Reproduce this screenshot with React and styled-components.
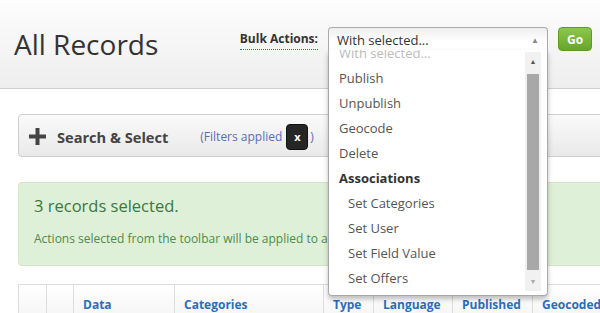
import React from 'react';
import styled, { createGlobalStyle } from 'styled-components';

const GlobalStyle = createGlobalStyle`
  html, body {
    margin: 0;
    padding: 0;
    background: #fff;
    font-family: "Open Sans", "Liberation Sans", sans-serif;
  }
  #root {
    width: 600px;
    height: 313px;
    overflow: hidden;
  }
`;

const Page = styled.div`
  width: 600px;
  height: 313px;
  overflow: hidden;
  position: relative;
`;

const Header = styled.header`
  height: 89px;
  box-sizing: border-box;
  border-bottom: 1px solid #cfcfcf;
  background: linear-gradient(#fdfdfd, #eeeeee);
  display: flex;
  align-items: flex-start;
`;

const Title = styled.h1`
  margin: 27px 0 0 14px;
  font-size: 28px;
  font-weight: 400;
  line-height: 34px;
  color: #333;
`;

const Toolbar = styled.div`
  margin-left: auto;
  margin-right: 8px;
  margin-top: 27px;
  display: flex;
  align-items: flex-start;
`;

const BulkLabel = styled.span`
  font-size: 12px;
  font-weight: 700;
  color: #333;
  line-height: 16px;
  margin-top: 4px;
  margin-right: 10px;
  padding-bottom: 2px;
  border-bottom: 1px dotted #2a6ebb;
`;

const SelectWrap = styled.div`
  position: relative;
  width: 220px;
`;

const SelectBox = styled.div`
  height: 24px;
  box-sizing: border-box;
  border: 1px solid #aaa;
  border-bottom: none;
  border-radius: 4px 4px 0 0;
  background: linear-gradient(#eeeeee, #ffffff 60%);
  display: flex;
  align-items: center;
  padding: 0 8px;
  font-size: 13px;
  color: #333;
`;

const Arrow = styled.span`
  margin-left: auto;
  font-size: 8px;
  color: #888;
`;

const Dropdown = styled.div`
  position: absolute;
  top: 23px;
  left: 0;
  width: 220px;
  height: 246px;
  box-sizing: border-box;
  background: #fff;
  border: 1px solid #aaa;
  border-top: none;
  border-radius: 0 0 4px 4px;
  box-shadow: 0 3px 5px rgba(0, 0, 0, 0.25);
  display: flex;
  overflow: hidden;
  z-index: 5;
`;

const List = styled.ul`
  list-style: none;
  margin: 0;
  padding: 0;
  flex: 1;
  margin-top: -9px;
`;

const Item = styled.li`
  height: 25px;
  line-height: 25px;
  font-size: 13px;
  padding-left: ${p => (p.$indent ? 19 : 10)}px;
  color: ${p => (p.$faded ? '#bbb' : p.$group ? '#333' : '#555')};
  font-weight: ${p => (p.$group ? 700 : 400)};
`;

const Scrollbar = styled.div`
  width: 16px;
  margin: 2px 6px 4px 0;
  background: #f1f1f1;
  display: flex;
  flex-direction: column;
  align-items: center;
`;

const ScrollArrow = styled.div`
  height: 19px;
  display: flex;
  align-items: center;
  justify-content: center;
  font-size: 7px;
  color: ${p => (p.$dim ? '#aaa' : '#555')};
`;

const Thumb = styled.div`
  width: 12px;
  flex: 1;
  margin: 3px 0 2px;
  background: #a8a8a8;
`;

const GoButton = styled.button`
  margin-left: 10px;
  width: 34px;
  height: 24px;
  border: 1px solid #5d9a2a;
  border-radius: 4px;
  background: linear-gradient(#8dc64c, #66a52b);
  color: #fff;
  font-family: inherit;
  font-size: 12px;
  font-weight: 700;
  padding: 0;
`;

const Content = styled.div`
  padding: 25px 0 0 18px;
  display: flex;
  flex-direction: column;
`;

const SearchPanel = styled.div`
  width: 700px;
  height: 43px;
  box-sizing: border-box;
  border: 1px solid #cfcfcf;
  border-radius: 4px;
  background: linear-gradient(#fafafa, #e9e9e9);
  display: flex;
  align-items: center;
  padding-left: 10px;
  padding-top: 2px;
`;

const PlusIcon = styled.svg`
  width: 17px;
  height: 17px;
  margin-right: 11px;
`;

const PanelTitle = styled.span`
  font-size: 14.6px;
  font-weight: 700;
  color: #444;
  margin-right: 32px;
`;

const FilterNote = styled.span`
  font-size: 12px;
  color: #5b6db5;
  display: flex;
  align-items: center;
`;

const ClearBadge = styled.span`
  width: 22px;
  height: 26px;
  margin: 0 2px 0 4px;
  border-radius: 4px;
  background: #262626;
  border: 1px solid #111;
  box-sizing: border-box;
  color: #fff;
  font-weight: 700;
  font-size: 11px;
  display: flex;
  align-items: center;
  justify-content: center;
`;

const Alert = styled.div`
  margin-top: 25px;
  width: 700px;
  height: 84px;
  box-sizing: border-box;
  background: #dff0d8;
  border: 1px solid #d3e8c4;
  border-radius: 4px;
  padding: 11px 15px;
  color: #3c763d;
`;

const AlertTitle = styled.div`
  font-size: 16.5px;
  line-height: 24px;
`;

const AlertText = styled.div`
  margin-top: 13px;
  font-size: 12px;
  line-height: 16px;
  color: #4f8a49;
`;

const Table = styled.div`
  margin-top: 18px;
  display: flex;
  height: 40px;
  border: 1px solid #ddd;
  border-bottom: none;
  background: linear-gradient(#ffffff, #f3f3f3);
  width: 700px;
  box-sizing: border-box;
`;

const Th = styled.div`
  width: ${p => p.$w}px;
  flex: none;
  box-sizing: border-box;
  border-right: 1px solid #ddd;
  padding: 11px 0 0 9px;
  font-size: 12px;
  font-weight: 700;
  color: #2a6ebb;
`;

const options = [
  { label: 'With selected...', faded: true },
  { label: 'Publish' },
  { label: 'Unpublish' },
  { label: 'Geocode' },
  { label: 'Delete' },
  { label: 'Associations', group: true },
  { label: 'Set Categories', indent: true },
  { label: 'Set User', indent: true },
  { label: 'Set Field Value', indent: true },
  { label: 'Set Offers', indent: true },
];

const columns = [
  { w: 28, label: '' },
  { w: 27, label: '' },
  { w: 101, label: 'Data' },
  { w: 149, label: 'Categories' },
  { w: 50, label: 'Type' },
  { w: 79, label: 'Language' },
  { w: 80, label: 'Published' },
  { w: 100, label: 'Geocoded' },
];

export default function App() {
  return (
    <Page>
      <GlobalStyle />
      <Header>
        <Title>All Records</Title>
        <Toolbar>
          <BulkLabel>Bulk Actions:</BulkLabel>
          <SelectWrap>
            <SelectBox>
              With selected...
              <Arrow>▲</Arrow>
            </SelectBox>
            <Dropdown>
              <List>
                {options.map(o => (
                  <Item key={o.label} $faded={o.faded} $group={o.group} $indent={o.indent}>
                    {o.label}
                  </Item>
                ))}
              </List>
              <Scrollbar>
                <ScrollArrow>▲</ScrollArrow>
                <Thumb />
                <ScrollArrow $dim>▼</ScrollArrow>
              </Scrollbar>
            </Dropdown>
          </SelectWrap>
          <GoButton>Go</GoButton>
        </Toolbar>
      </Header>
      <Content>
        <SearchPanel>
          <PlusIcon viewBox="0 0 17 17">
            <path d="M6.5 0h4v6.5H17v4h-6.5V17h-4v-6.5H0v-4h6.5z" fill="#444" />
          </PlusIcon>
          <PanelTitle>Search &amp; Select</PanelTitle>
          <FilterNote>
            (Filters applied <ClearBadge>x</ClearBadge>)
          </FilterNote>
        </SearchPanel>
        <Alert>
          <AlertTitle>3 records selected.</AlertTitle>
          <AlertText>Actions selected from the toolbar will be applied to all selected records.</AlertText>
        </Alert>
        <Table>
          {columns.map((c, i) => (
            <Th key={i} $w={c.w}>{c.label}</Th>
          ))}
        </Table>
      </Content>
    </Page>
  );
}
